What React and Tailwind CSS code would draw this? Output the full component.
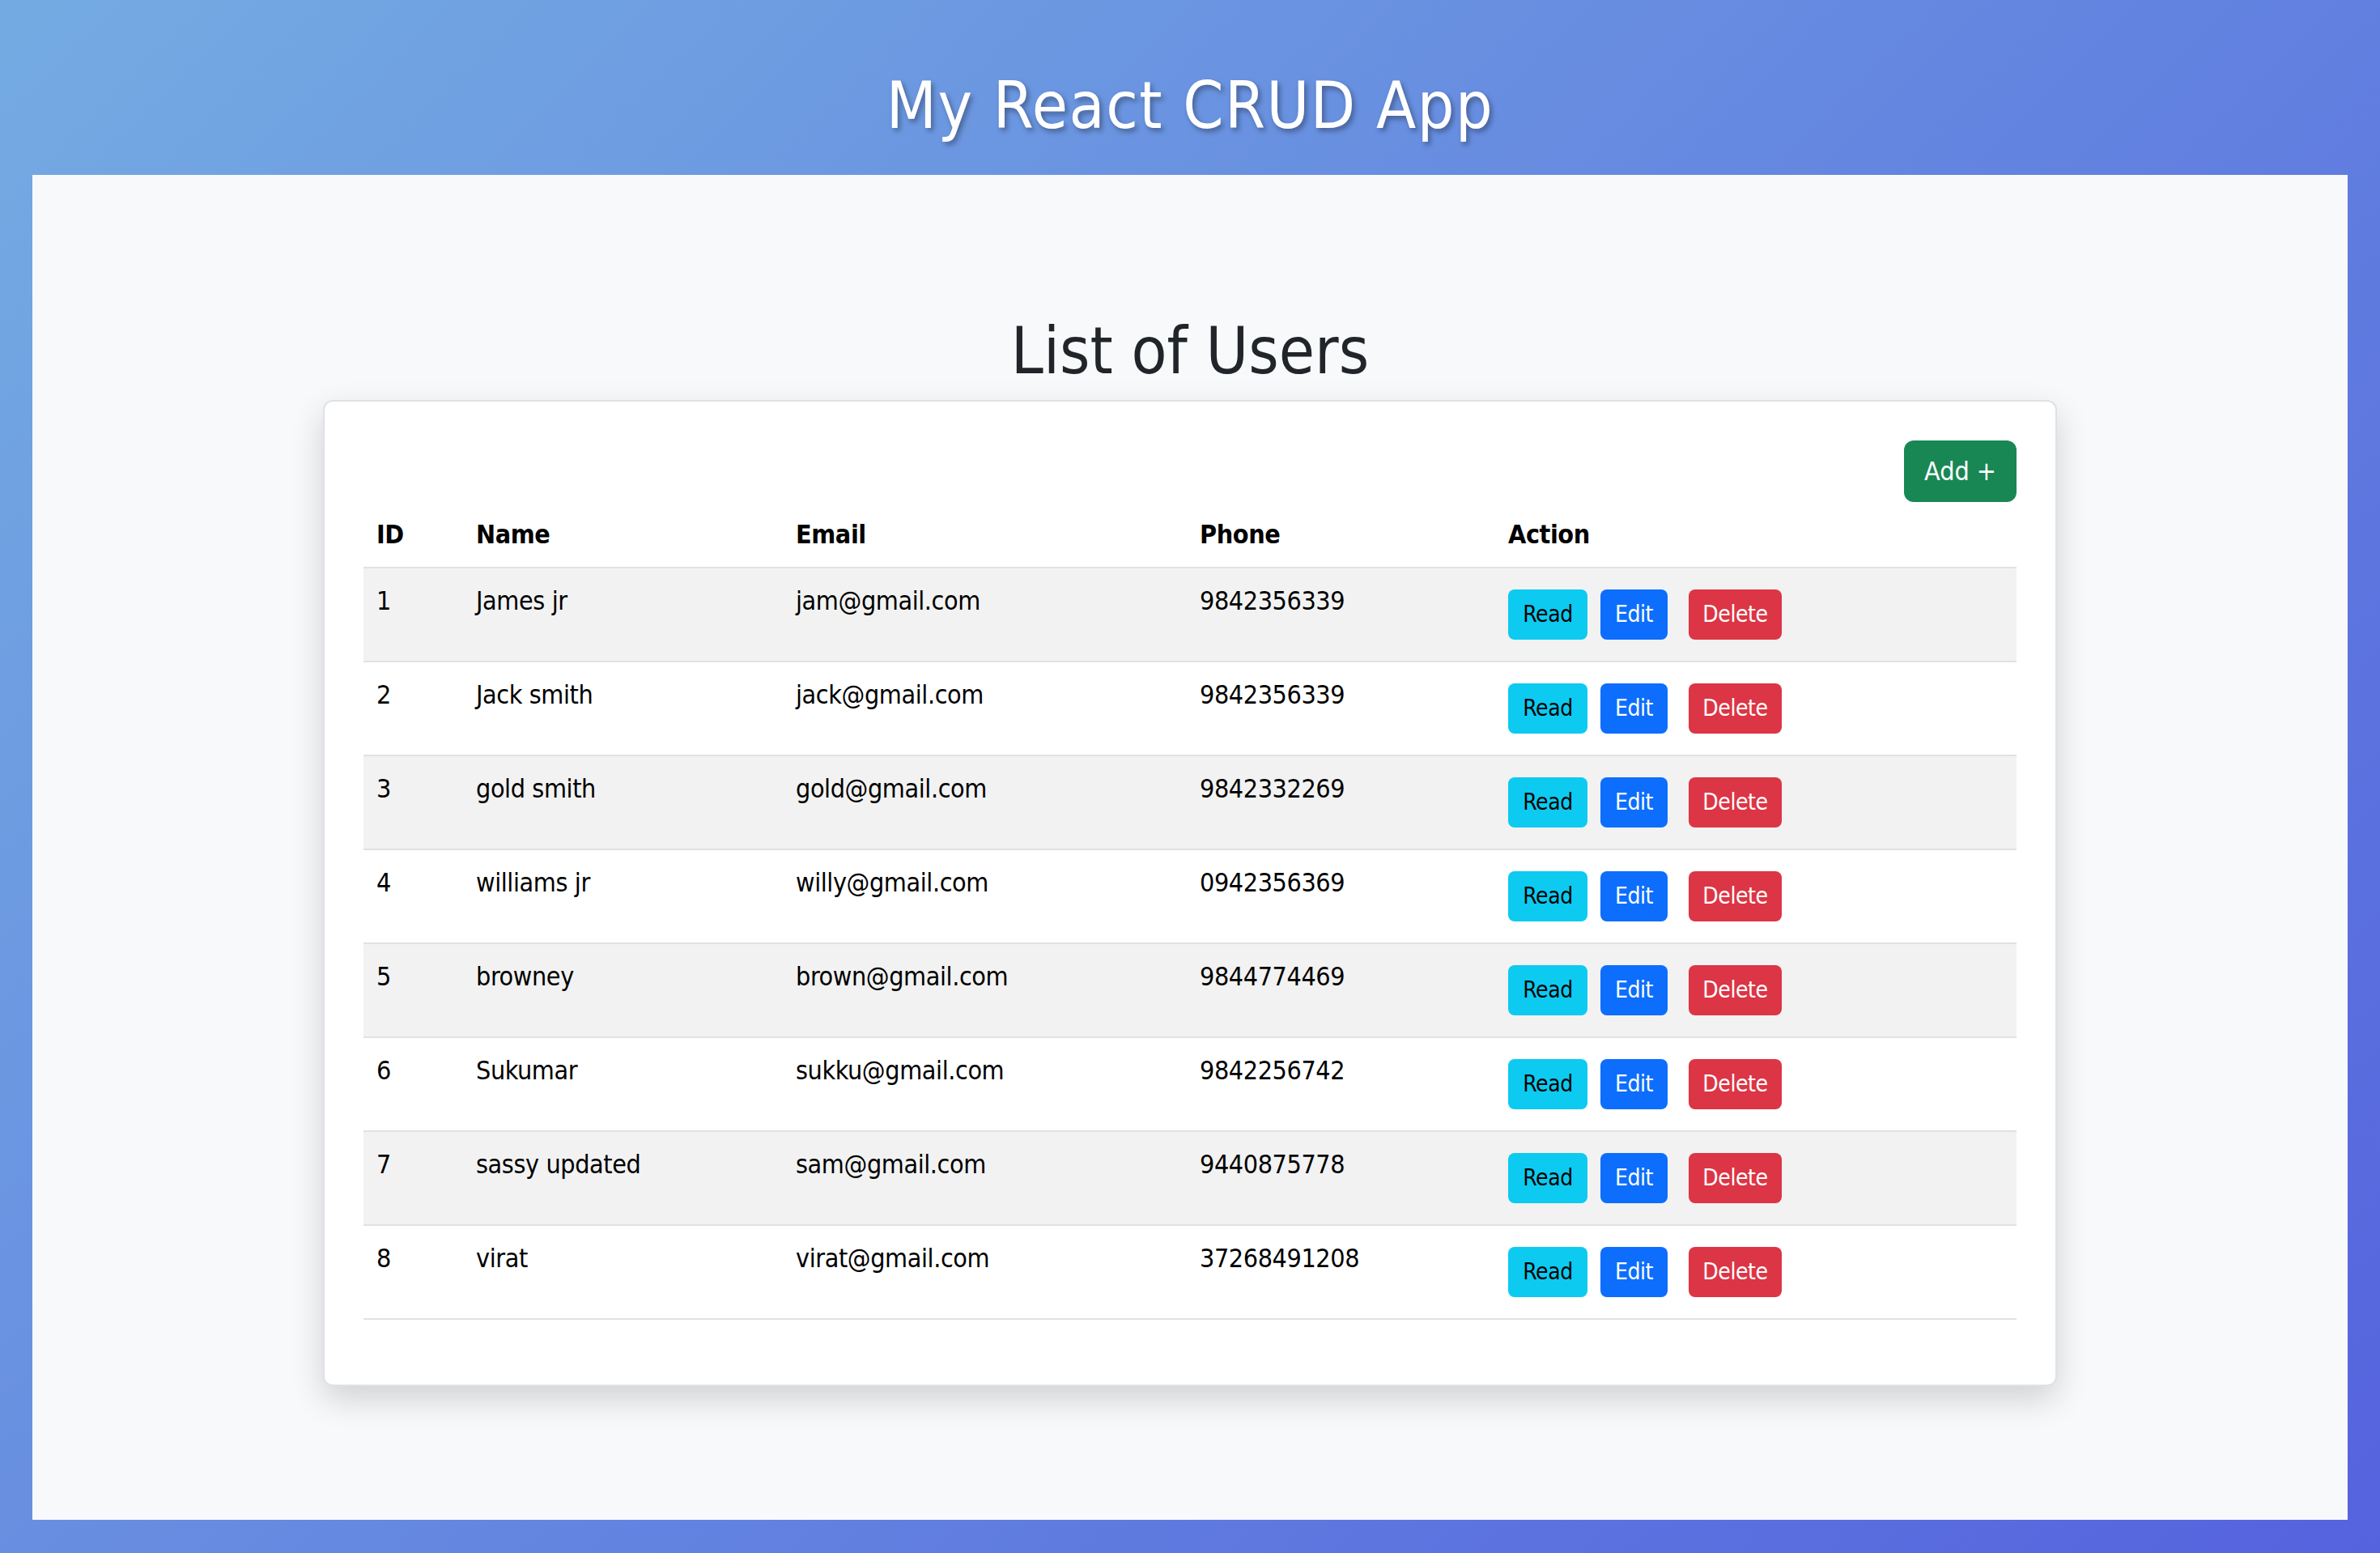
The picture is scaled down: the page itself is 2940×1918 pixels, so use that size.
const users = [
  { id: 1, name: 'James jr', email: 'jam@gmail.com', phone: '9842356339' },
  { id: 2, name: 'Jack smith', email: 'jack@gmail.com', phone: '9842356339' },
  { id: 3, name: 'gold smith', email: 'gold@gmail.com', phone: '9842332269' },
  { id: 4, name: 'williams jr', email: 'willy@gmail.com', phone: '0942356369' },
  { id: 5, name: 'browney', email: 'brown@gmail.com', phone: '9844774469' },
  { id: 6, name: 'Sukumar', email: 'sukku@gmail.com', phone: '9842256742' },
  { id: 7, name: 'sassy updated', email: 'sam@gmail.com', phone: '9440875778' },
  { id: 8, name: 'virat', email: 'virat@gmail.com', phone: '37268491208' },
]

const font = "font-['DejaVu_Sans_Condensed','DejaVu_Sans',Verdana,sans-serif] font-stretch-condensed"

export default function App() {
  return (
    <div className={`min-h-screen w-full bg-[linear-gradient(135deg,#74ABE2,#5563DE)] pb-[41px] ${font}`}>
      {/* Header */}
      <header className="h-[216px] pt-[83px] text-center">
        <h1 className="text-[80px] leading-[96px] tracking-[1.5px] text-white [text-shadow:3px_4px_6px_rgba(0,0,0,0.35)]">
          My React CRUD App
        </h1>
      </header>

      {/* Main panel */}
      <main className="mx-[40px] h-[1661px] bg-[#f8f9fa] pt-[170px]">
        <h2 className="text-center text-[80px] leading-[96px] text-[#212529]">List of Users</h2>

        <div className="mx-auto mt-[12px] w-[2142px] rounded-[12px] border-2 border-[#dee2e6] bg-white p-[48px] shadow-[0_16px_40px_rgba(0,0,0,0.16)]">
          <div className="flex justify-end">
            <button className="h-[76px] w-[139px] rounded-[12px] bg-[#198754] text-[32px] text-white">
              Add +
            </button>
          </div>

          <div className="mb-[32px] text-[32px] leading-[48px] tracking-[-0.4px] text-black">
            {/* Table head */}
            <div className="flex h-[82px] border-b-2 border-[#dee2e6] pt-4 font-bold">
              <div className="w-[123px] px-4">ID</div>
              <div className="w-[395px] px-4">Name</div>
              <div className="w-[499px] px-4">Email</div>
              <div className="w-[381px] px-4">Phone</div>
              <div className="flex-1 px-4">Action</div>
            </div>

            {users.map((u, idx) => (
              <div
                key={u.id}
                className={`flex h-[116px] border-b-2 border-[#dee2e6] ${idx % 2 === 0 ? 'bg-[#f2f2f2]' : 'bg-white'}`}
              >
                <div className="w-[123px] px-4 pt-4">{u.id}</div>
                <div className="w-[395px] px-4 pt-4">{u.name}</div>
                <div className="w-[499px] px-4 pt-4">{u.email}</div>
                <div className="w-[381px] px-4 pt-4">{u.phone}</div>
                <div className="flex flex-1 items-start px-4 pt-[26px] text-[28px] leading-[42px]">
                  <button className="h-[62px] w-[98px] rounded-[8px] bg-[#0dcaf0] text-black">Read</button>
                  <button className="ml-[16px] h-[62px] w-[83px] rounded-[8px] bg-[#0d6efd] text-white">Edit</button>
                  <button className="ml-[26px] h-[62px] w-[115px] rounded-[8px] bg-[#dc3545] text-white">Delete</button>
                </div>
              </div>
            ))}
          </div>
        </div>
      </main>
    </div>
  )
}
